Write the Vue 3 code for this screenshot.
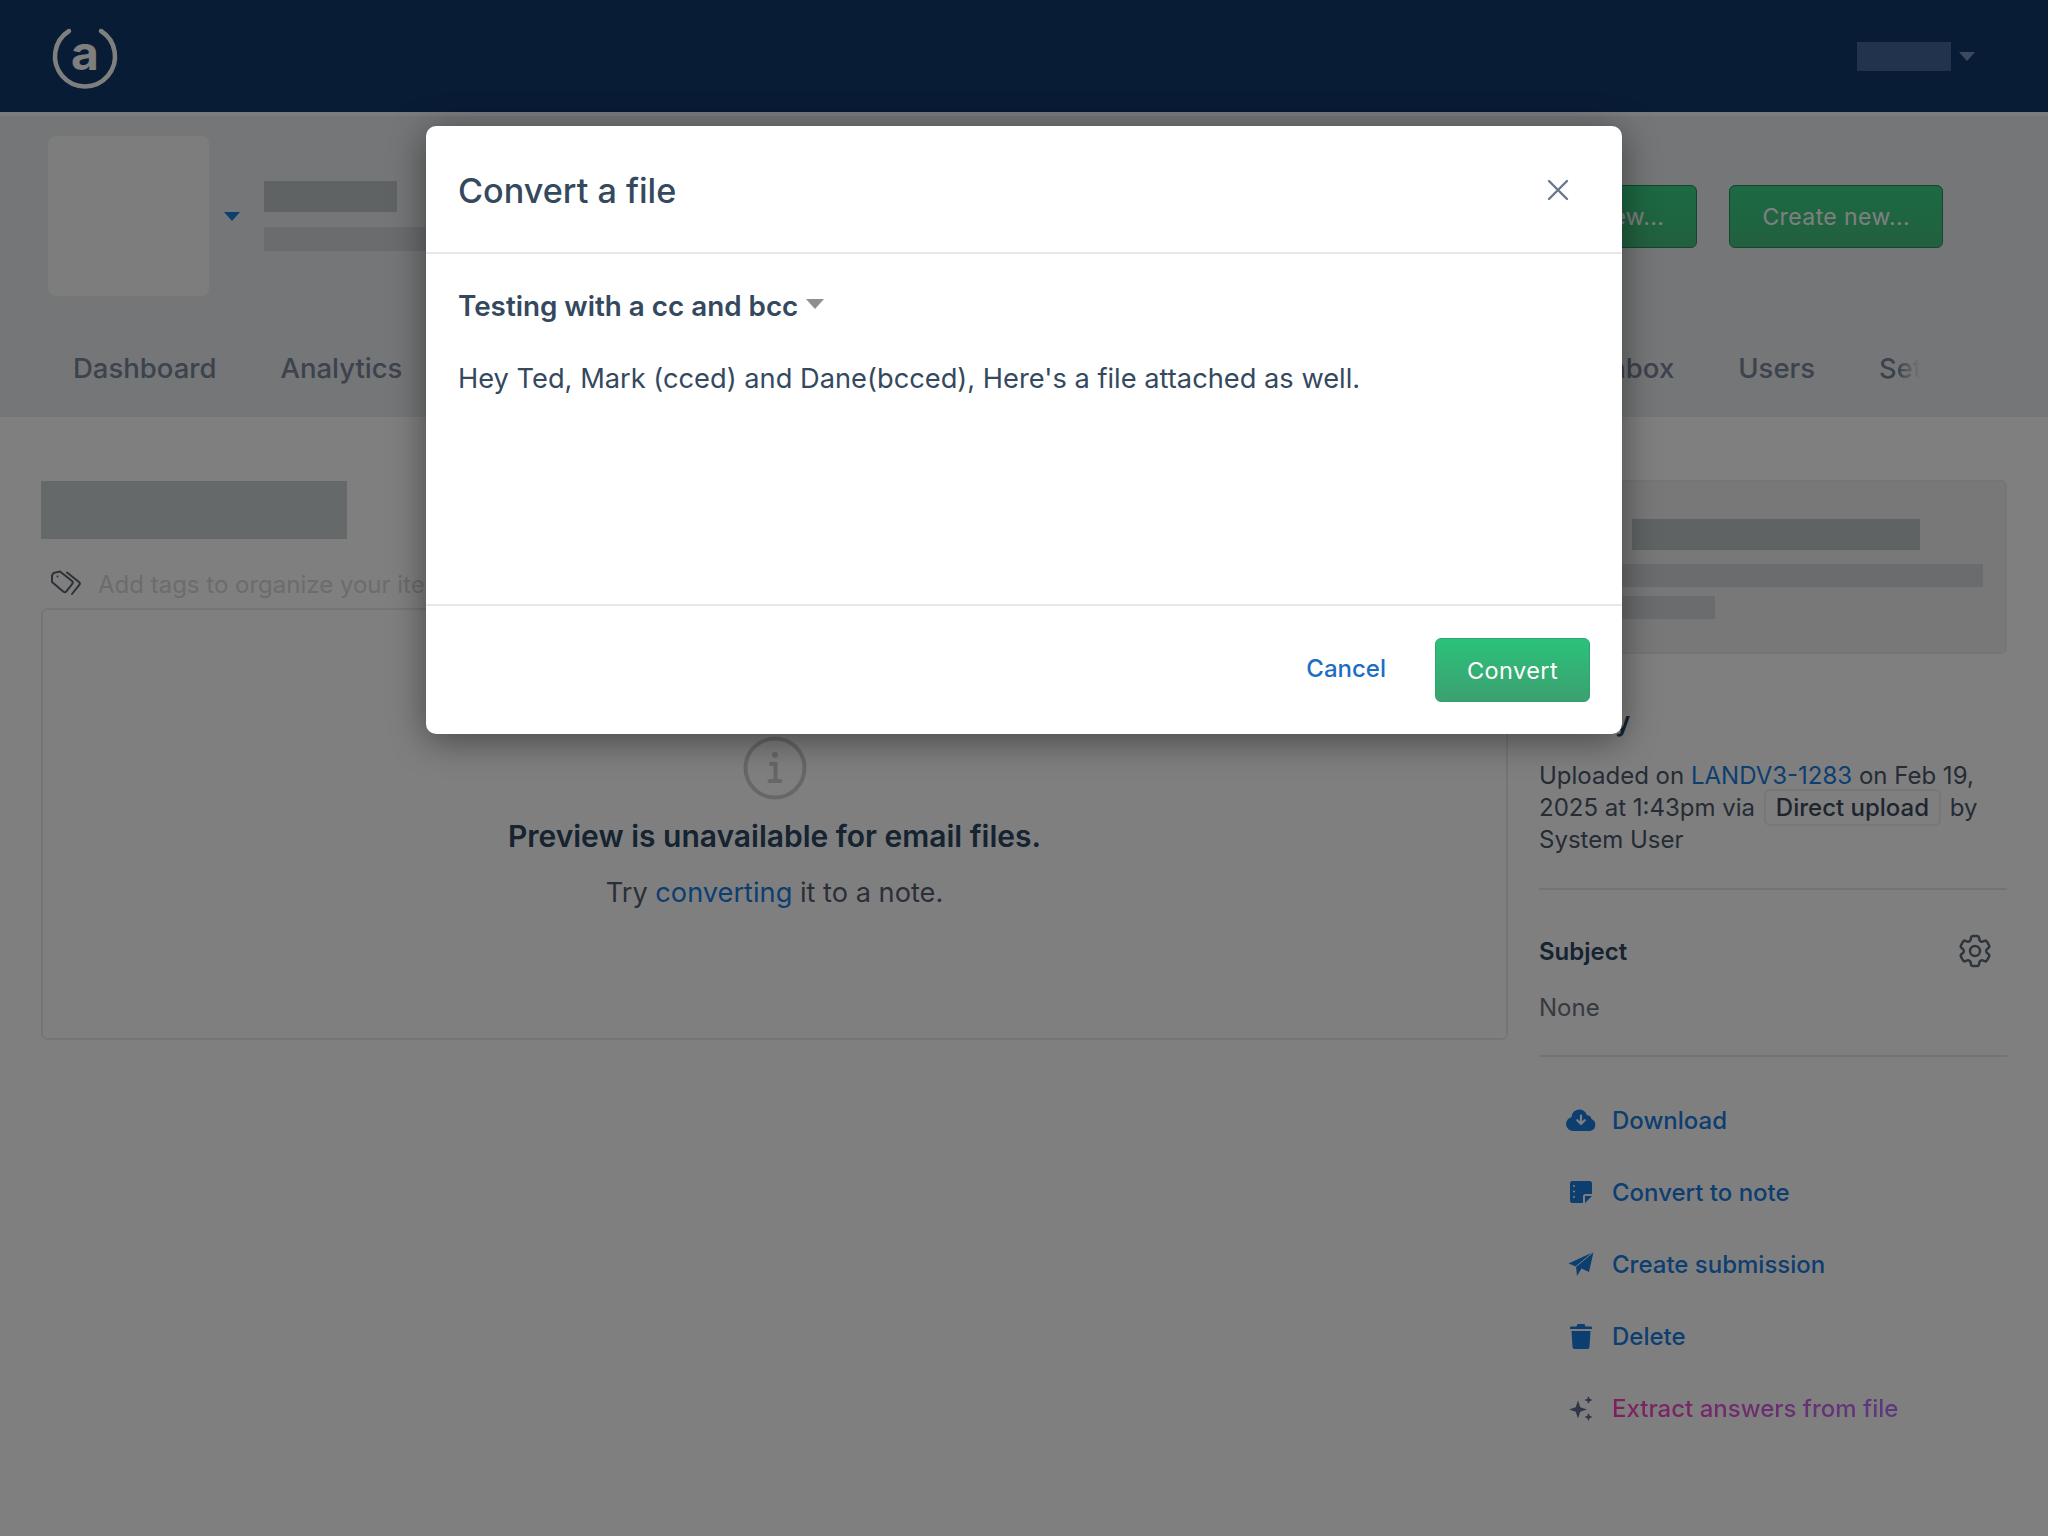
<template>
  <div class="page">
    <header class="topbar">
      <svg class="logo" viewBox="0 0 70 70" width="70" height="70">
        <path d="M19 10A30 30 0 1 0 51 10" fill="none" stroke="#fff" stroke-width="4.500" stroke-linecap="round" />
        <text x="35" y="49" text-anchor="middle" class="logo-letter">a</text>
      </svg>
      <div class="user">
        <span class="user-name"></span>
        <span class="caret user-caret"></span>
      </div>
    </header>

    <section class="band">
      <div class="org-row">
        <div class="org-tile"></div>
        <span class="caret org-caret"></span>
        <div class="org-info">
          <span class="redact org-name"></span>
          <span class="redact org-sub"></span>
        </div>
        <div class="org-actions">
          <button class="btn-green">View new...</button>
          <button class="btn-green">Create new...</button>
        </div>
      </div>
      <nav class="tabs">
        <div class="tab-group">
          <a>Dashboard</a>
          <a>Analytics</a>
        </div>
        <div class="tab-group tab-group-end">
          <a>Inbox</a>
          <a>Users</a>
          <a class="tab-faded">Settings</a>
        </div>
      </nav>
    </section>

    <main class="content">
      <div class="left-col">
        <div class="redact file-title"></div>
        <div class="tag-row">
          <svg viewBox="0 0 32 28" width="32" height="28" fill="none" stroke="#5c6470" stroke-width="2" stroke-linejoin="round">
            <path d="M2 5.500 3.500 3 10 1.500l12 9.500a2 2 0 0 1 .3 2.800l-6 7.600a2 2 0 0 1-2.800.3L2 12Z" />
            <circle cx="7.500" cy="6.500" r="1" fill="#5c6470" stroke="none" />
            <path d="M17 2.500l12 9.500a2 2 0 0 1 .3 2.800l-7.300 9.200" stroke-linecap="round" />
          </svg>
          <span class="tag-placeholder">Add tags to organize your items</span>
        </div>
        <div class="preview">
          <svg class="info-icon" viewBox="0 0 64 64" width="64" height="64" fill="none" stroke="#cfcfcf" stroke-width="4">
            <circle cx="32" cy="32" r="29.500" />
            <circle cx="32" cy="19" r="3" fill="#cfcfcf" stroke="none" />
            <path d="M28 28h4.500v17M26.500 45h11" stroke-linecap="round" />
          </svg>
          <h2>Preview is unavailable for email files.</h2>
          <p>Try <a>converting</a> it to a note.</p>
        </div>
      </div>

      <aside class="right-col">
        <div class="info-card">
          <span class="redact card-line-a"></span>
          <span class="redact card-line-b"></span>
          <span class="redact card-line-c"></span>
        </div>
        <h3 class="history">History</h3>
        <p class="history-text">
          Uploaded on <a>LANDV3-1283</a> on Feb 19, 2025 at 1:43pm via
          <span class="pill">Direct upload</span> by System User
        </p>
        <hr />
        <div class="subject-row">
          <strong>Subject</strong>
          <svg viewBox="0 0 24 24" width="40" height="40" fill="none" stroke="#5f6a78" stroke-width="1.500">
            <path d="M9.594 3.940c.09-.542.56-.94 1.110-.94h2.593c.55 0 1.020.398 1.110.94l.213 1.281c.063.374.313.686.645.870.074.04.147.083.22.127.325.196.72.257 1.075.124l1.217-.456a1.125 1.125 0 0 1 1.370.49l1.296 2.247a1.125 1.125 0 0 1-.26 1.431l-1.003.827c-.293.241-.438.613-.43.992a7.723 7.723 0 0 1 0 .255c-.008.378.137.75.43.991l1.004.827c.424.35.534.955.26 1.430l-1.298 2.247a1.125 1.125 0 0 1-1.369.491l-1.217-.456c-.355-.133-.75-.072-1.076.124a6.470 6.470 0 0 1-.22.128c-.331.183-.581.495-.644.869l-.213 1.281c-.09.543-.56.94-1.110.94h-2.594c-.55 0-1.019-.398-1.110-.94l-.213-1.281c-.062-.374-.312-.686-.644-.87a6.520 6.520 0 0 1-.22-.127c-.325-.196-.72-.257-1.076-.124l-1.217.456a1.125 1.125 0 0 1-1.369-.49l-1.297-2.247a1.125 1.125 0 0 1 .26-1.431l1.004-.827c.292-.24.437-.613.43-.991a6.932 6.932 0 0 1 0-.255c.007-.38-.138-.751-.43-.992l-1.004-.827a1.125 1.125 0 0 1-.26-1.430l1.297-2.247a1.125 1.125 0 0 1 1.370-.491l1.216.456c.356.133.751.072 1.076-.124.072-.044.146-.086.22-.128.332-.183.582-.495.644-.869l.214-1.280Z" />
            <circle cx="12" cy="12" r="3" />
          </svg>
        </div>
        <p class="subject-value">None</p>
        <hr class="divider-tight" />
        <ul class="actions">
          <li>
            <svg viewBox="0 0 30 22" width="30" height="22">
              <path fill="#1a7ce0" d="M7 22a7 7 0 0 1-1.600-13.800A8 8 0 0 1 13 .5a8.500 8.500 0 0 1 8 5.700A4.600 4.600 0 0 1 25.500 10 6.300 6.300 0 0 1 24 22Z" />
              <path d="M15 6.500v8M11.300 11.200 15 15l3.700-3.800" fill="none" stroke="#fff" stroke-width="2.200" stroke-linecap="round" stroke-linejoin="round" />
            </svg>
            <a>Download</a>
          </li>
          <li>
            <svg viewBox="0 0 22 22" width="22" height="22">
              <path fill="#1a7ce0" d="M2.500 0h17A2.500 2.500 0 0 1 22 2.500V13h-6.500a2.500 2.500 0 0 0-2.500 2.500V22H2.500A2.500 2.500 0 0 1 0 19.500V2.500A2.500 2.500 0 0 1 2.500 0Z" />
              <path fill="#1a7ce0" d="M15 15h7l-7 7Z" />
              <path d="M4 5v.1M4 10.500v.1M4 16v.1" stroke="#fff" stroke-width="2" stroke-linecap="round" />
            </svg>
            <a>Convert to note</a>
          </li>
          <li>
            <svg viewBox="0 0 25 24" width="25" height="24">
              <path fill="#1a7ce0" d="M25 0 20.500 20 13 16.500 8.500 24l-1-9.500L0 11.500Z" />
              <path d="M25 0 7.500 14.500" stroke="#fff" stroke-width="1" />
            </svg>
            <a>Create submission</a>
          </li>
          <li>
            <svg viewBox="0 0 22 25" width="22" height="25">
              <path fill="#1a7ce0" d="M7.500 0h7l1 2.500H21a1 1 0 0 1 1 1V5H0V3.500a1 1 0 0 1 1-1h5.500ZM1.500 7h19l-1 16a2 2 0 0 1-2 2h-13a2 2 0 0 1-2-2Z" />
            </svg>
            <a>Delete</a>
          </li>
          <li>
            <svg viewBox="0 0 25 25" width="25" height="25">
              <path fill="#5c708c" d="M9.500 4.500 11.800 11.200 18.500 13.500 11.800 15.800 9.500 22.500 7.200 15.800.5 13.500 7.200 11.200ZM20 0l1.200 2.800L24 4l-2.800 1.200L20 8l-1.200-2.800L16 4l2.800-1.200ZM20 17l1.200 2.800L24 21l-2.800 1.200L20 25l-1.200-2.800L16 21l2.800-1.200Z" />
            </svg>
            <a class="ai-link">Extract answers from file</a>
          </li>
        </ul>
      </aside>
    </main>

    <div class="backdrop">
      <div class="modal">
        <div class="modal-head">
          <h1>Convert a file</h1>
          <svg viewBox="0 0 22 22" width="22" height="22" fill="none" stroke="#67788c" stroke-width="2.400" stroke-linecap="round">
            <path d="M2 2l18 18M20 2 2 20" />
          </svg>
        </div>
        <div class="modal-body">
          <div class="email-subject">
            <span>{{ subject }}</span>
            <span class="caret subject-caret"></span>
          </div>
          <p>{{ message }}</p>
        </div>
        <div class="modal-foot">
          <a class="cancel">Cancel</a>
          <button class="btn-convert">Convert</button>
        </div>
      </div>
    </div>
  </div>
</template>

<script setup>
const subject = 'Testing with a cc and bcc'
const message = "Hey Ted, Mark (cced) and Dane(bcced), Here's a file attached as well."
</script>

<style>
html,
body {
  margin: 0;
  background: #fff;
}
</style>

<style scoped>
.page {
  position: relative;
  width: 2048px;
  height: 1536px;
  overflow: hidden;
  background: #fff;
  font-family: Inter, "Liberation Sans", sans-serif;
  color: #3c5470;
}

.topbar {
  display: flex;
  align-items: center;
  justify-content: space-between;
  height: 112px;
  padding: 0 73px 0 50px;
  background: #12396a;
}

.logo-letter {
  font-family: Inter, sans-serif;
  font-size: 48px;
  font-weight: 700;
  fill: #fff;
}

.user {
  display: flex;
  align-items: center;
  gap: 8px;
}

.user-name {
  width: 94px;
  height: 29px;
  background: #44669a;
}

.caret {
  display: block;
  width: 0;
  height: 0;
  border-left: 8px solid transparent;
  border-right: 8px solid transparent;
}

.user-caret {
  border-top: 9px solid #7894c0;
}

.band {
  height: 305px;
  box-sizing: border-box;
  padding: 20px 105px 0 48px;
  border-top: 4px solid #f4f8ff;
  background: #e8ecef;
}

.org-row {
  display: flex;
  align-items: center;
}

.org-tile {
  width: 161px;
  height: 160px;
  border-radius: 8px;
  background: #fbfbfb;
}

.org-caret {
  margin-left: 15px;
  border-top: 9px solid #1a7ce0;
}

.org-info {
  display: flex;
  flex-direction: column;
  gap: 15px;
  margin-left: 24px;
}

.redact {
  display: block;
  background: #cad2d4;
}

.org-name {
  width: 133px;
  height: 31px;
  background: #bec6c8;
}

.org-sub {
  width: 200px;
  height: 24px;
  background: #d4d8dc;
}

.org-actions {
  display: flex;
  gap: 32px;
  margin-left: auto;
}

.btn-green {
  box-sizing: border-box;
  height: 63px;
  padding: 2px 32px 0;
  border: 1px solid #2a8a58;
  border-radius: 6px;
  background: linear-gradient(#38d488, #44c080);
  color: #fff;
  font-family: inherit;
  font-size: 23px;
  letter-spacing: 0.4px;
}

.tabs {
  display: flex;
  justify-content: space-between;
  margin-top: 48px;
  padding-left: 25px;
}

.tab-group {
  display: flex;
  gap: 64px;
  font-size: 27.500px;
  font-weight: 500;
  line-height: 48px;
}

.tab-group a {
  color: #7a8698;
}

.tab-group-end {
  margin-right: 23px;
}

.tab-group .tab-faded {
  width: 41px;
  overflow: hidden;
  white-space: nowrap;
  -webkit-mask-image: linear-gradient(90deg, #000 45%, transparent);
  mask-image: linear-gradient(90deg, #000 45%, transparent);
}

.content {
  display: grid;
  grid-template-columns: 1467px 468px;
  gap: 31px;
  padding: 64px 41px 0;
}

.file-title {
  width: 306px;
  height: 58px;
}

.tag-row {
  display: flex;
  align-items: center;
  gap: 16px;
  height: 40px;
  margin: 25px 0 4px;
  padding-left: 9px;
}

.tag-placeholder {
  font-size: 24px;
  color: #d8d8d8;
  white-space: nowrap;
}

.preview {
  display: flex;
  flex-direction: column;
  align-items: center;
  box-sizing: border-box;
  height: 432px;
  padding-top: 126px;
  border: 2px solid #eaeaea;
  border-radius: 6px;
}

.info-icon {
  display: block;
}

.preview h2 {
  margin: 16px 0 0;
  font-size: 30px;
  font-weight: 600;
  line-height: 40px;
  color: #2c4660;
}

.preview p {
  margin: 17px 0 0;
  font-size: 27.200px;
  line-height: 40px;
  color: #566070;
}

a {
  color: #1a7ce0;
}

.info-card {
  display: flex;
  flex-direction: column;
  box-sizing: border-box;
  height: 174px;
  margin-top: -1px;
  padding: 37px 24px 0;
  border: 2px solid #eaeaea;
  border-radius: 6px;
  background: #f0f1f2;
}

.card-line-a {
  width: 288px;
  height: 31px;
  margin-left: 67px;
  background: #bec6c8;
}

.card-line-b {
  width: 418px;
  height: 23px;
  margin-top: 14px;
  background: #d4d8dc;
}

.card-line-c {
  width: 150px;
  height: 23px;
  margin-top: 9px;
  background: #d4d8dc;
}

.history {
  margin: 53px 0 23px;
  font-size: 26px;
  font-weight: 600;
  line-height: 30px;
  color: #2c4660;
}

.history-text {
  margin: 0;
  font-size: 24px;
  line-height: 32px;
  color: #4a586c;
}

.pill {
  padding: 2px 10px;
  margin: 0 2px;
  border: 2px solid #eeeeee;
  border-radius: 6px;
  font-weight: 500;
  color: #3e4a5c;
}

hr {
  height: 2px;
  margin: 32px 0 0;
  border: 0;
  background: #e6e6e6;
}

.subject-row {
  display: flex;
  align-items: center;
  justify-content: space-between;
  height: 32px;
  margin-top: 45px;
  padding-right: 12px;
  font-size: 24px;
  color: #2c4660;
}

.subject-row strong {
  font-weight: 600;
}

.subject-value {
  margin: 25px 0 0;
  font-size: 24px;
  line-height: 32px;
  color: #6c7480;
}

.divider-tight {
  margin-top: 31px;
}

.actions {
  margin: 27px 0 0;
  padding: 0;
  list-style: none;
}

.actions li {
  display: flex;
  align-items: center;
  gap: 16px;
  height: 72px;
  padding-left: 27px;
  font-size: 24px;
  font-weight: 500;
}

.actions svg {
  flex: none;
  width: 30px;
}

.ai-link {
  background: linear-gradient(90deg, #ff40bc, #b474ff);
  -webkit-background-clip: text;
  background-clip: text;
  color: transparent;
}

/* dimmed layer over the whole page, the dialog sits on it */
.backdrop {
  position: absolute;
  inset: 0;
  background: rgba(0, 0, 0, 0.5);
}

.modal {
  position: absolute;
  top: 126px;
  left: 426px;
  width: 1196px;
  height: 608px;
  display: flex;
  flex-direction: column;
  border-radius: 10px;
  background: #fff;
  box-shadow: 0 6px 36px rgba(0, 0, 0, 0.45);
  color: #34495e;
}

.modal-head {
  display: flex;
  align-items: center;
  justify-content: space-between;
  box-sizing: border-box;
  height: 128px;
  padding: 2px 53px 0 32px;
  border-bottom: 2px solid #e8e8e8;
}

.modal-head h1 {
  margin: 0;
  font-size: 34.200px;
  font-weight: 500;
}

.modal-body {
  flex: 1;
  padding: 32px 32px 0;
}

.email-subject {
  display: flex;
  align-items: center;
  gap: 8px;
  font-size: 27.800px;
  font-weight: 600;
  line-height: 40px;
}

.subject-caret {
  margin-top: -4px;
  border-top: 10px solid #8f8f8f;
  border-left-width: 9px;
  border-right-width: 9px;
}

.modal-body p {
  margin: 33px 0 0;
  font-size: 27.250px;
  line-height: 40px;
}

.modal-foot {
  display: flex;
  align-items: center;
  justify-content: flex-end;
  gap: 49px;
  box-sizing: border-box;
  height: 130px;
  padding: 0 32px;
  border-top: 2px solid #e8e8e8;
}

.modal-foot .cancel {
  margin-top: -3px;
  font-size: 24px;
  font-weight: 500;
  color: #1b6ec2;
}

.btn-convert {
  box-sizing: border-box;
  width: 155px;
  height: 64px;
  border: 1px solid #2fa56c;
  border-radius: 6px;
  background: linear-gradient(#2bc27b, #3d9f70);
  color: #fff;
  font-family: inherit;
  font-size: 23.500px;
  letter-spacing: 0.4px;
}
</style>
